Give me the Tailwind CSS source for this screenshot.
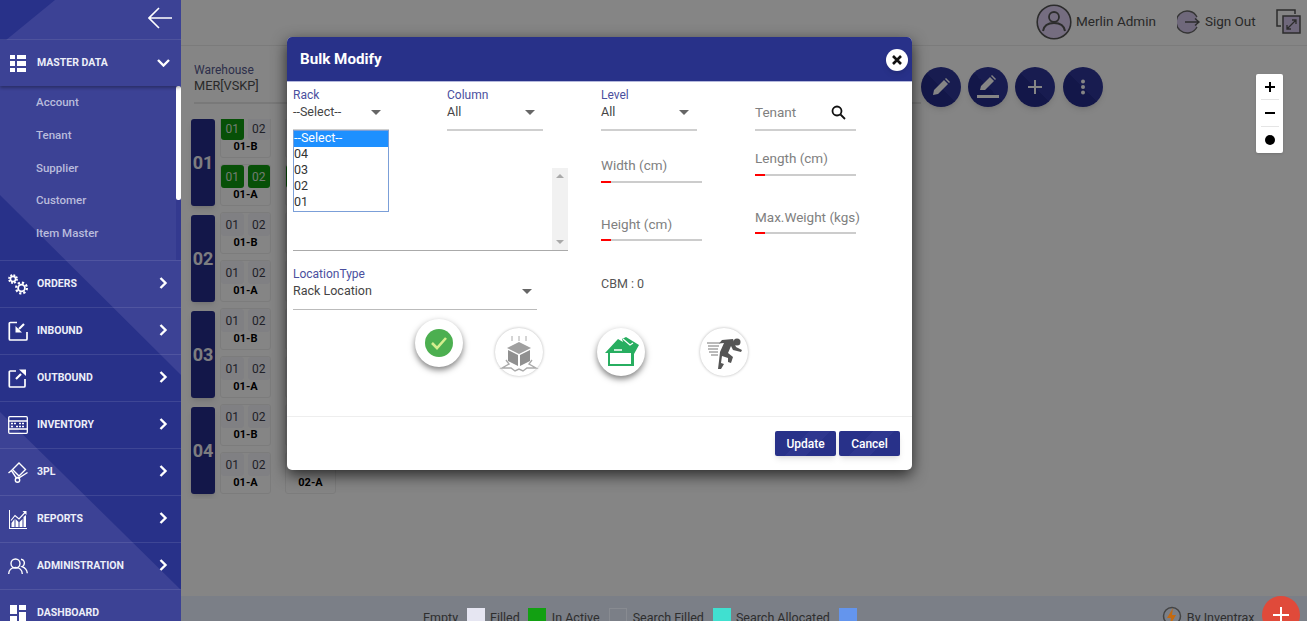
<!DOCTYPE html>
<html lang="en">
<head>
    <meta charset="UTF-8">
    <meta name="viewport" content="width=device-width, initial-scale=1.0">
    <title>Bulk Modify</title>
    <script src="https://cdn.jsdelivr.net/npm/@tailwindcss/browser@4"></script>
</head>

<body class="font-[Roboto,sans-serif]">
<div class="relative flex h-[621px] w-[1307px] overflow-hidden bg-white">

    <!-- sidebar -->
    <aside class="relative z-20 flex h-full w-[181px] shrink-0 flex-col overflow-hidden bg-[#3c4295] text-[10.500px] font-bold text-[#eceef8]">
        <svg class="absolute inset-0" width="181" height="621"><polygon points="0,0 55,0 0,45" fill="#283189"/><polygon points="0,195 181,375 181,590 0,412" fill="#283189"/></svg>

        <div class="relative flex h-[40px] shrink-0 items-center justify-end border-b border-white/10 pr-[9px]">
            <svg class="mb-[4px]" width="24" height="22" viewBox="0 0 24 22" fill="none" stroke="#fff" stroke-width="1.6"><path d="M11 1 1 11l10 10M1 11h23"/></svg>
        </div>

        <div class="relative z-10 flex h-[46px] shrink-0 items-center bg-[#3c4295] shadow-[0_2px_3px_rgba(0,0,0,0.3)]">
            <svg class="ml-[10px] mr-[11px]" width="16" height="17" viewBox="0 0 16 17" fill="#fff"><path d="M0 0h5v4H0zM7 0h9v4H7zM0 6h5v5H0zM7 6h9v5H7zM0 13h5v4H0zM7 13h9v4H7z"/></svg>
            <span>MASTER DATA</span>
            <svg class="ml-auto mr-[11px]" width="13" height="8" viewBox="0 0 13 8" fill="none" stroke="#fff" stroke-width="2.4"><path d="m1 1 5.500 5.500L12 1"/></svg>
        </div>

        <div class="relative h-[174px] shrink-0 pl-[36px] text-[11.500px] font-medium text-[#b9bcdc]">
            <div class="flex h-[33px] items-center">Account</div>
            <div class="flex h-[33px] items-center">Tenant</div>
            <div class="flex h-[33px] items-center">Supplier</div>
            <div class="flex h-[32px] items-center">Customer</div>
            <div class="flex h-[33px] items-center">Item Master</div>
            <div class="absolute right-0 top-0 h-full w-[5px] bg-[#33398f]">
                <div class="h-[114px] rounded-[2px] bg-white"></div>
            </div>
        </div>

        <div class="relative flex h-[47px] shrink-0 items-center border-t border-white/10">
            <svg class="ml-[8px] mr-[9px]" width="20" height="21" viewBox="0 0 20 21" fill="none" stroke="#fff"><circle cx="5" cy="5" r="2.600" stroke-width="1.600"/><circle cx="5" cy="5" r="4" stroke-width="1.800" stroke-dasharray="1.800 1.340"/><circle cx="13.500" cy="14" r="3.400" stroke-width="1.800"/><circle cx="13.500" cy="14" r="5.400" stroke-width="2.200" stroke-dasharray="2.200 2"/></svg>
            <span>ORDERS</span>
            <svg class="ml-auto -mt-[3px] mr-[13px]" width="9" height="12" viewBox="0 0 9 12" fill="none" stroke="#fff" stroke-width="2.400"><path d="m1.500 1 5 5-5 5"/></svg>
        </div>
        <div class="relative flex h-[47px] shrink-0 items-center border-t border-white/10">
            <svg class="ml-[8px] mr-[9px]" width="20" height="20" viewBox="0 0 20 20" fill="none" stroke="#fff" stroke-width="1.700"><path d="M9 1.500H2.300a1 1 0 0 0-1 1V18a1 1 0 0 0 1 1H18a1 1 0 0 0 1-1v-7"/><path d="m16 3-5 5" stroke-width="2.200"/><path d="M7.500 5v6.500H14Z" fill="#fff" stroke="none"/></svg>
            <span>INBOUND</span>
            <svg class="ml-auto -mt-[3px] mr-[13px]" width="9" height="12" viewBox="0 0 9 12" fill="none" stroke="#fff" stroke-width="2.400"><path d="m1.500 1 5 5-5 5"/></svg>
        </div>
        <div class="relative flex h-[47px] shrink-0 items-center border-t border-white/10">
            <svg class="ml-[8px] mr-[9px]" width="20" height="20" viewBox="0 0 20 20" fill="none" stroke="#fff" stroke-width="1.700"><path d="M8 3H2.300a1 1 0 0 0-1 1V18a1 1 0 0 0 1 1H16a1 1 0 0 0 1-1v-7"/><path d="m8 11 5-5" stroke-width="2.200"/><path d="M11 1.500h7V8Z" fill="#fff" stroke="none"/></svg>
            <span>OUTBOUND</span>
            <svg class="ml-auto -mt-[3px] mr-[13px]" width="9" height="12" viewBox="0 0 9 12" fill="none" stroke="#fff" stroke-width="2.400"><path d="m1.500 1 5 5-5 5"/></svg>
        </div>
        <div class="relative flex h-[47px] shrink-0 items-center border-t border-white/10">
            <svg class="ml-[8px] mr-[9px]" width="20" height="18" viewBox="0 0 20 18" fill="none" stroke="#fff" stroke-width="1.300"><rect x=".7" y=".7" width="18.600" height="16.600" rx="1"/><path d="M.7 5h18.600M.7 13h18.600"/><path d="M3 7.500h5M11 7.500h6M3 10.500h2M8 10.500h9" stroke-width="1.600" stroke-dasharray="2 1"/></svg>
            <span>INVENTORY</span>
            <svg class="ml-auto -mt-[3px] mr-[13px]" width="9" height="12" viewBox="0 0 9 12" fill="none" stroke="#fff" stroke-width="2.400"><path d="m1.500 1 5 5-5 5"/></svg>
        </div>
        <div class="relative flex h-[47px] shrink-0 items-center border-t border-white/10">
            <svg class="ml-[8px] mr-[9px]" width="20" height="21" viewBox="0 0 20 21" fill="none" stroke="#fff" stroke-width="1.400"><path d="m11 1 6.500 6.500L11 14 4.500 7.500Z"/><path d="M.5 11 3.500 8.500 8 15.500h3.500l8-5"/><circle cx="9.500" cy="18" r="2.200"/></svg>
            <span>3PL</span>
            <svg class="ml-auto -mt-[3px] mr-[13px]" width="9" height="12" viewBox="0 0 9 12" fill="none" stroke="#fff" stroke-width="2.400"><path d="m1.500 1 5 5-5 5"/></svg>
        </div>
        <div class="relative flex h-[47px] shrink-0 items-center border-t border-white/10">
            <svg class="ml-[9px] mr-[10px]" width="18" height="19" viewBox="0 0 18 19" fill="#fff"><path d="M0 0h1v18h17v1H0z"/><path d="M2.500 17v-4l3-4v8zM6.500 17V9l3 3v5zM10.500 17v-5l3-3v8zM14.500 17V7l2.500-2v12z"/><path d="M2 10.500 6 5.500l4 3.500 6.500-7" fill="none" stroke="#fff" stroke-width="1.200"/><path d="M13.500 1H17.500V5Z"/></svg>
            <span>REPORTS</span>
            <svg class="ml-auto -mt-[3px] mr-[13px]" width="9" height="12" viewBox="0 0 9 12" fill="none" stroke="#fff" stroke-width="2.400"><path d="m1.500 1 5 5-5 5"/></svg>
        </div>
        <div class="relative flex h-[47px] shrink-0 items-center border-t border-white/10">
            <svg class="ml-[8px] mr-[9px]" width="20" height="17" viewBox="0 0 20 17" fill="none" stroke="#fff" stroke-width="1.400"><circle cx="7.500" cy="5.500" r="4.500"/><path d="M.7 16c0-4 3-6.500 6.800-6.500S14.300 12 14.300 16M13 1.200c3 .5 4 3 3 5.500-.4 1-1 1.500-2 2 3 1 5 3.500 5.300 6.500"/></svg>
            <span>ADMINISTRATION</span>
            <svg class="ml-auto -mt-[3px] mr-[13px]" width="9" height="12" viewBox="0 0 9 12" fill="none" stroke="#fff" stroke-width="2.400"><path d="m1.500 1 5 5-5 5"/></svg>
        </div>
        <div class="relative flex h-[47px] shrink-0 items-center border-t border-white/10">
            <svg class="ml-[10px] mr-[11px]" width="16" height="16" viewBox="0 0 16 16" fill="#fff"><path d="M0 0h7v9H0zM9 0h7v5H9zM9 7h7v9H9zM0 11h7v5H0z"/></svg>
            <span>DASHBOARD</span>
        </div>
    </aside>

    <!-- main area -->
    <main class="flex h-full flex-1 flex-col text-[#4f4f4f]">
        <header class="flex h-[46px] shrink-0 items-center border-b border-[#ebebeb] pb-[2px] text-[13.500px]">
            <svg class="ml-[855px]" width="36" height="36" viewBox="0 0 36 36"><circle cx="18" cy="18" r="16.800" fill="#e0d2f5" stroke="#555" stroke-width="1.600"/><circle cx="18" cy="13" r="5" fill="none" stroke="#555" stroke-width="1.800"/><path d="M7 27c1-6 6-8 11-8s10 2 11 8" fill="none" stroke="#555" stroke-width="2"/></svg>
            <span class="ml-[4px]">Merlin Admin</span>
            <svg class="ml-[21px]" width="24" height="24" viewBox="0 0 24 24"><path d="M20 7A11 11 0 1 0 20 17" fill="#d5c8ec" stroke="#666" stroke-width="1.400"/><path d="M8 12h14m-4-3.500 4 3.500-4 3.500" fill="none" stroke="#555" stroke-width="1.400"/></svg>
            <span class="ml-[4px]">Sign Out</span>
            <svg class="ml-[20px]" width="25" height="25" viewBox="0 0 25 25" fill="none" stroke="#555" stroke-width="1.500"><path d="M19 5V1H1v16h4"/><rect x="7" y="7" width="17" height="17" fill="#d5c8ec"/><path d="m11 20 9-9m-4 0h4v4m-5 5h-4v-4" stroke-width="1.300"/></svg>
        </header>

        <div class="relative min-h-0 flex-1">
            <div class="flex h-[73px] pl-[13px] pt-[16px]">
                <div class="h-[42px] w-[727px] border-b-2 border-[#e8e8e8] text-[12px] leading-[16px] text-[#575b90]">
                    <div>Warehouse</div>
                    <div class="text-[12.750px] text-[#505050]">MER[VSKP]</div>
                </div>
                <div class="mt-[5px] flex gap-[7px]">
                    <div class="flex h-[40px] w-[40px] items-center justify-center rounded-full bg-[linear-gradient(45deg,#262c8c_50%,#2f369a_50%)] shadow-md">
                        <svg width="18" height="18" viewBox="0 0 18 18" fill="#fff"><path d="m1 17 1-5L12 2l4 4L6 16zM13 1l1-1 4 4-1 1z"/></svg>
                    </div>
                    <div class="flex h-[40px] w-[40px] items-center justify-center rounded-full bg-[linear-gradient(45deg,#262c8c_50%,#2f369a_50%)] shadow-md">
                        <svg width="22" height="24" viewBox="0 0 22 24" fill="#fff"><path d="m3 15 1-4 9-9 4 4-9 9zM14 1l1-1 4 4-1 1zM0 20h22v3H0z"/></svg>
                    </div>
                    <div class="flex h-[40px] w-[40px] items-center justify-center rounded-full bg-[linear-gradient(45deg,#262c8c_50%,#2f369a_50%)] shadow-md">
                        <svg width="14" height="14" viewBox="0 0 14 14" fill="#fff"><path d="M6 0h2v6h6v2H8v6H6V8H0V6h6z"/></svg>
                    </div>
                    <div class="ml-[1px] flex h-[40px] w-[40px] items-center justify-center rounded-full bg-[linear-gradient(45deg,#262c8c_50%,#2f369a_50%)] shadow-md">
                        <svg width="6" height="16" viewBox="0 0 6 16" fill="#fff"><circle cx="3" cy="2.500" r="2"/><circle cx="3" cy="8" r="2"/><circle cx="3" cy="13.500" r="2"/></svg>
                    </div>
                </div>
            </div>

            <!-- rack map -->
            <div class="h-[380px] overflow-hidden pl-[10px] text-[#3e3e4e]">
                <div class="-mt-[3px] flex flex-col">

                    <div class="flex h-[96px]">
                        <div class="mr-[5px] mt-[3px] flex h-[87px] w-[24px] items-center justify-center rounded-[3px] bg-[#262c8c] text-[18px] font-bold text-[#f0f0f5] shadow-md">01</div>
                        <div class="flex w-[65px] flex-col gap-[6px]">
                            <div class="h-[42px] w-[51px] rounded-[3px] border border-[#eeeeee]"><div class="flex gap-[4px]"><div class="flex h-[23px] w-[23px] items-center justify-center rounded-[3px] bg-[#0e9a0e] text-[12px] text-[#d8ecd8]">01</div><div class="flex h-[23px] w-[23px] items-center justify-center rounded-[3px] bg-[#f6f6fc] text-[12px]">02</div></div><div class="text-center text-[11px] font-bold leading-[14px] text-black">01-B</div></div>
                            <div class="h-[42px] w-[51px] rounded-[3px] border border-[#eeeeee]"><div class="flex gap-[4px]"><div class="flex h-[23px] w-[23px] items-center justify-center rounded-[3px] bg-[#0e9a0e] text-[12px] text-[#d8ecd8]">01</div><div class="flex h-[23px] w-[23px] items-center justify-center rounded-[3px] bg-[#0e9a0e] text-[12px] text-[#d8ecd8]">02</div></div><div class="text-center text-[11px] font-bold leading-[14px] text-black">01-A</div></div>
                        </div>
                        <div class="flex w-[51px] flex-col gap-[6px]">
                            <div class="h-[42px] rounded-[3px] border border-[#eeeeee]"><div class="h-[23px] w-[23px] rounded-[3px] bg-[#f6f6fc]"></div></div>
                            <div class="h-[42px] rounded-[3px] border border-[#eeeeee]"><div class="h-[23px] w-[23px] rounded-[3px] bg-[#0e9a0e]"></div></div>
                        </div>
                    </div>

                    <div class="flex h-[96px]">
                        <div class="mr-[5px] mt-[3px] flex h-[87px] w-[24px] items-center justify-center rounded-[3px] bg-[#262c8c] text-[18px] font-bold text-[#f0f0f5] shadow-md">02</div>
                        <div class="flex w-[65px] flex-col gap-[6px]">
                            <div class="h-[42px] w-[51px] rounded-[3px] border border-[#eeeeee]"><div class="flex gap-[4px]"><div class="flex h-[23px] w-[23px] items-center justify-center rounded-[3px] bg-[#f6f6fc] text-[12px]">01</div><div class="flex h-[23px] w-[23px] items-center justify-center rounded-[3px] bg-[#f6f6fc] text-[12px]">02</div></div><div class="text-center text-[11px] font-bold leading-[14px] text-black">01-B</div></div>
                            <div class="h-[42px] w-[51px] rounded-[3px] border border-[#eeeeee]"><div class="flex gap-[4px]"><div class="flex h-[23px] w-[23px] items-center justify-center rounded-[3px] bg-[#f6f6fc] text-[12px]">01</div><div class="flex h-[23px] w-[23px] items-center justify-center rounded-[3px] bg-[#f6f6fc] text-[12px]">02</div></div><div class="text-center text-[11px] font-bold leading-[14px] text-black">01-A</div></div>
                        </div>
                        <div class="flex w-[51px] flex-col gap-[6px]">
                            <div class="h-[42px] rounded-[3px] border border-[#eeeeee]"><div class="h-[23px] w-[23px] rounded-[3px] bg-[#f6f6fc]"></div></div>
                            <div class="h-[42px] rounded-[3px] border border-[#eeeeee]"><div class="h-[23px] w-[23px] rounded-[3px] bg-[#f6f6fc]"></div></div>
                        </div>
                    </div>

                    <div class="flex h-[96px]">
                        <div class="mr-[5px] mt-[3px] flex h-[87px] w-[24px] items-center justify-center rounded-[3px] bg-[#262c8c] text-[18px] font-bold text-[#f0f0f5] shadow-md">03</div>
                        <div class="flex w-[65px] flex-col gap-[6px]">
                            <div class="h-[42px] w-[51px] rounded-[3px] border border-[#eeeeee]"><div class="flex gap-[4px]"><div class="flex h-[23px] w-[23px] items-center justify-center rounded-[3px] bg-[#f6f6fc] text-[12px]">01</div><div class="flex h-[23px] w-[23px] items-center justify-center rounded-[3px] bg-[#f6f6fc] text-[12px]">02</div></div><div class="text-center text-[11px] font-bold leading-[14px] text-black">01-B</div></div>
                            <div class="h-[42px] w-[51px] rounded-[3px] border border-[#eeeeee]"><div class="flex gap-[4px]"><div class="flex h-[23px] w-[23px] items-center justify-center rounded-[3px] bg-[#f6f6fc] text-[12px]">01</div><div class="flex h-[23px] w-[23px] items-center justify-center rounded-[3px] bg-[#f6f6fc] text-[12px]">02</div></div><div class="text-center text-[11px] font-bold leading-[14px] text-black">01-A</div></div>
                        </div>
                        <div class="flex w-[51px] flex-col gap-[6px]">
                            <div class="h-[42px] rounded-[3px] border border-[#eeeeee]"><div class="h-[23px] w-[23px] rounded-[3px] bg-[#f6f6fc]"></div></div>
                            <div class="h-[42px] rounded-[3px] border border-[#eeeeee]"><div class="h-[23px] w-[23px] rounded-[3px] bg-[#f6f6fc]"></div></div>
                        </div>
                    </div>

                    <div class="flex h-[96px]">
                        <div class="mr-[5px] mt-[3px] flex h-[87px] w-[24px] items-center justify-center rounded-[3px] bg-[#262c8c] text-[18px] font-bold text-[#f0f0f5] shadow-md">04</div>
                        <div class="flex w-[65px] flex-col gap-[6px]">
                            <div class="h-[42px] w-[51px] rounded-[3px] border border-[#eeeeee]"><div class="flex gap-[4px]"><div class="flex h-[23px] w-[23px] items-center justify-center rounded-[3px] bg-[#f6f6fc] text-[12px]">01</div><div class="flex h-[23px] w-[23px] items-center justify-center rounded-[3px] bg-[#f6f6fc] text-[12px]">02</div></div><div class="text-center text-[11px] font-bold leading-[14px] text-black">01-B</div></div>
                            <div class="h-[42px] w-[51px] rounded-[3px] border border-[#eeeeee]"><div class="flex gap-[4px]"><div class="flex h-[23px] w-[23px] items-center justify-center rounded-[3px] bg-[#f6f6fc] text-[12px]">01</div><div class="flex h-[23px] w-[23px] items-center justify-center rounded-[3px] bg-[#f6f6fc] text-[12px]">02</div></div><div class="text-center text-[11px] font-bold leading-[14px] text-black">01-A</div></div>
                        </div>
                        <div class="flex w-[51px] flex-col gap-[6px]">
                            <div class="h-[42px] rounded-[3px] border border-[#eeeeee]"><div class="h-[23px] w-[23px] rounded-[3px] bg-[#f6f6fc]"></div></div>
                            <div class="h-[42px] rounded-[3px] border border-[#eeeeee]"><div class="h-[23px]"></div><div class="text-center text-[11px] font-bold leading-[14px] text-black">02-A</div></div>
                        </div>
                    </div>

                </div>
            </div>
        </div>

        <footer class="relative z-20 flex h-[25px] shrink-0 items-start bg-[#7b7f87] pl-[242px] pt-[12px] text-[12.500px] leading-[20px] text-[#2e2e2e]">
            <span>Empty</span>
            <div class="ml-[9px] h-[20px] w-[18px] bg-[#e6e6f2]"></div>
            <span class="ml-[5px]">Filled</span>
            <div class="ml-[8px] h-[20px] w-[18px] bg-[#12a012]"></div>
            <span class="ml-[6px]">In Active</span>
            <div class="ml-[9px] h-[20px] w-[18px] border border-[#888b91] bg-[#7b7f87]"></div>
            <span class="ml-[6px]">Search Filled</span>
            <div class="ml-[9px] h-[20px] w-[18px] bg-[#40e0d0]"></div>
            <span class="ml-[5px]">Search Allocated</span>
            <div class="ml-[9px] h-[20px] w-[18px] bg-[#6495ed]"></div>
            <svg class="ml-[305px] -mt-[3px]" width="20" height="22" viewBox="0 0 20 22" fill="none"><circle cx="10" cy="11" r="8.500" stroke="#444" stroke-width="1.500"/><path d="M11 3 5 13h4l-1 7 6-10h-4z" fill="#c46a10"/></svg>
            <span class="ml-[5px]">By Inventrax</span>
        </footer>
    </main>

    <!-- backdrop -->
    <div class="absolute inset-y-0 left-[181px] right-0 z-10 bg-black/48"></div>

    <!-- map zoom control -->
    <div class="absolute left-[1256px] top-[74px] z-20 flex h-[79px] w-[27px] flex-col items-center rounded-[2px] bg-white text-black shadow-sm">
        <div class="flex h-[26px] w-[18px] items-center justify-center border-b border-[#e5e5e5]"><svg width="10" height="10" viewBox="0 0 10 10"><path d="M4 0h2v4h4v2H6v4H4V6H0V4h4z"/></svg></div>
        <div class="flex h-[27px] w-[18px] items-center justify-center border-b border-[#e5e5e5]"><svg width="10" height="2" viewBox="0 0 10 2"><path d="M0 0h10v2H0z"/></svg></div>
        <div class="flex flex-1 items-center justify-center"><div class="h-[10px] w-[10px] rounded-full bg-black"></div></div>
    </div>

    <!-- add button -->
    <div class="absolute left-[1262px] top-[596px] z-20 flex h-[38px] w-[38px] items-center justify-center rounded-full bg-[#e04a3a]">
        <svg width="16" height="16" viewBox="0 0 16 16" fill="#fff"><path d="M7 0h2v7h7v2H9v7H7V9H0V7h7z"/></svg>
    </div>

    <!-- bulk modify dialog -->
    <div class="absolute left-[287px] top-[37px] z-30 flex h-[433px] w-[625px] flex-col rounded-[5px] bg-white text-[#444] shadow-[0_5px_15px_rgba(0,0,0,0.7)]">
        <div class="flex h-[45px] shrink-0 items-center rounded-t-[5px] border-b border-[#b4b8dc] bg-[#283189] pl-[13px] pr-[4px] text-[15.200px] font-bold text-white">
            <span>Bulk Modify</span>
            <div class="ml-auto flex h-[22px] w-[22px] translate-y-[1px] items-center justify-center rounded-full bg-white shadow-md">
                <svg width="10" height="10" viewBox="0 0 10 10" stroke="#111" stroke-width="2.600"><path d="m1 1 8 8M9 1 1 9"/></svg>
            </div>
        </div>

        <div class="flex pl-[6px]">
            <div class="relative w-[308px]">
                <div class="flex">
                    <div class="w-[154px]">
                        <div class="h-[49px] w-[96px] border-b-2 border-[#cfcfcf] pt-[6px]">
                            <div class="text-[12px] leading-[14px] text-[#4a4f9e]">Rack</div>
                            <div class="mt-[2px] flex h-[16px] items-center text-[12.500px]">--Select--<svg class="ml-auto mr-[8px]" width="10" height="5" viewBox="0 0 10 5" fill="#666"><path d="M0 0h10L5 5z"/></svg></div>
                        </div>
                    </div>
                    <div class="h-[49px] w-[96px] border-b-2 border-[#cfcfcf] pt-[6px]">
                        <div class="text-[12px] leading-[14px] text-[#4a4f9e]">Column</div>
                        <div class="mt-[2px] flex h-[16px] items-center text-[12.500px]">All<svg class="ml-auto mr-[8px]" width="10" height="5" viewBox="0 0 10 5" fill="#666"><path d="M0 0h10L5 5z"/></svg></div>
                    </div>
                </div>

                <div class="absolute left-0 top-[48px] h-[82px] w-[96px] border border-[#7b9fd8] bg-white text-[12.500px] leading-[14px] text-[#333]">
                    <div class="h-[16px] bg-[#1e90ff] text-white">--Select--</div>
                    <div class="h-[16px]">04</div>
                    <div class="h-[16px]">03</div>
                    <div class="h-[16px]">02</div>
                    <div class="h-[16px]">01</div>
                </div>

                <div class="mt-[37px] flex h-[83px] w-[275px] justify-end border-b border-[#aaa]">
                    <div class="flex w-[16px] flex-col items-center justify-between bg-[#f1f1f1] py-[6px]">
                        <svg width="8" height="4" viewBox="0 0 8 4" fill="#aaa"><path d="M4 0l4 4H0z"/></svg>
                        <svg width="8" height="4" viewBox="0 0 8 4" fill="#aaa"><path d="M0 0h8L4 4z"/></svg>
                    </div>
                </div>

                <div class="mt-[16px] h-[43px] w-[244px] border-b border-[#bbb]">
                    <div class="text-[12px] leading-[14px] text-[#4a4f9e]">LocationType</div>
                    <div class="mt-[2px] flex h-[17px] items-center text-[12.500px]">Rack Location<svg class="ml-auto mr-[5px]" width="10" height="5" viewBox="0 0 10 5" fill="#666"><path d="M0 0h10L5 5z"/></svg></div>
                </div>
            </div>

            <div class="w-[154px]">
                <div class="h-[49px] w-[96px] border-b-2 border-[#cfcfcf] pt-[6px]">
                    <div class="text-[12px] leading-[14px] text-[#4a4f9e]">Level</div>
                    <div class="mt-[2px] flex h-[16px] items-center text-[12.500px]">All<svg class="ml-auto mr-[8px]" width="10" height="5" viewBox="0 0 10 5" fill="#666"><path d="M0 0h10L5 5z"/></svg></div>
                </div>
                <div class="mt-[25px] w-[101px]">
                    <div class="h-[18px] text-[13.500px] leading-[18px] text-[#808080]">Width (cm)</div>
                    <div class="mt-[7px] flex h-[2px]"><div class="w-[10px] bg-[#f00]"></div><div class="flex-1 bg-[#ccc]"></div></div>
                </div>
                <div class="mt-[32px] w-[101px]">
                    <div class="h-[18px] text-[13.500px] leading-[18px] text-[#808080]">Height (cm)</div>
                    <div class="mt-[6px] flex h-[2px]"><div class="w-[10px] bg-[#f00]"></div><div class="flex-1 bg-[#ccc]"></div></div>
                </div>
                <div class="mt-[35px] text-[12.500px] leading-[16px] text-[#555]">CBM : 0</div>
            </div>

            <div class="w-[150px]">
                <div class="flex h-[49px] w-[101px] items-center border-b-2 border-[#cfcfcf] pt-[14px] text-[13.500px] text-[#808080]">
                    Tenant
                    <svg class="ml-auto mr-[10px] -mt-[1px]" width="15" height="15" viewBox="0 0 15 15" fill="none" stroke="#111" stroke-width="1.800"><circle cx="6" cy="6" r="4.500"/><path d="m9.500 9.500 4.500 4.500"/></svg>
                </div>
                <div class="mt-[18px] w-[101px]">
                    <div class="h-[18px] text-[13.500px] leading-[18px] text-[#808080]">Length (cm)</div>
                    <div class="mt-[7px] flex h-[2px]"><div class="w-[10px] bg-[#f00]"></div><div class="flex-1 bg-[#ccc]"></div></div>
                </div>
                <div class="mt-[32px] w-[101px]">
                    <div class="h-[18px] whitespace-nowrap text-[13.500px] leading-[18px] text-[#808080]">Max.Weight (kgs)</div>
                    <div class="mt-[6px] flex h-[2px]"><div class="w-[10px] bg-[#f00]"></div><div class="flex-1 bg-[#ccc]"></div></div>
                </div>
            </div>
        </div>

        <!-- status icons -->
        <div class="mt-[9px] flex items-start pl-[128px]">
            <div class="flex h-[48px] w-[48px] items-center justify-center rounded-full bg-white shadow-[0_3px_6px_rgba(0,0,0,0.5)]">
                <svg width="30" height="30" viewBox="0 0 30 30"><circle cx="15" cy="15" r="14" fill="#4caf50"/><path d="m8 15 5 5 9-10" fill="none" stroke="#d4ee8e" stroke-width="2.600"/></svg>
            </div>
            <div class="ml-[32px] mt-[9px] flex h-[48px] w-[48px] items-center justify-center rounded-full bg-white shadow-[0_0_3px_rgba(0,0,0,0.3)]">
                <svg width="48" height="48" viewBox="0 0 48 48"><path d="M17 8v5M24 8v5M31 8v5" stroke="#aaa"/><polygon points="24,14 36,20 24,26 12,20" fill="#a0a0a0"/><polygon points="13,22 23,27 23,38 13,33" fill="#909090"/><polygon points="25,27 35,22 35,33 25,38" fill="#909090"/><path d="M11 32l3 4-7 4 9 0 4 3 4-2 4 2 4-3 9 0-7-4 3-4" fill="none" stroke="#aaa" stroke-width="1.400"/></svg>
            </div>
            <div class="ml-[54px] mt-[9px] flex h-[48px] w-[48px] items-center justify-center rounded-full bg-white shadow-[0_3px_6px_rgba(0,0,0,0.5)]">
                <svg width="48" height="48" viewBox="0 0 48 48"><path d="M8 25 21 11l5 3-1-3 4-2 13 8-5 9v12H11V25z" fill="#27ae60"/><rect x="13" y="25" width="21" height="11" fill="#fff"/><path d="M17 22h8" stroke="#fff" stroke-width="1.500"/><path d="m26 11 7 6 3-2" fill="none" stroke="#fff" stroke-width="1.200"/></svg>
            </div>
            <div class="ml-[55px] mt-[9px] flex h-[48px] w-[48px] items-center justify-center rounded-full bg-white shadow-[0_0_3px_rgba(0,0,0,0.3)]">
                <svg width="48" height="48" viewBox="0 0 48 48"><circle cx="37" cy="14" r="3.500" fill="#555"/><path d="M22 12l11-1 3 8 6 3-1 2-8-2-2-4-3 7 5 4-2 6-3-1v-4l-6-2-1 7 3 1-3 5h-3l1-8 1-9 4-9-5 .5z" fill="#555"/><path d="M7 15h13M8 18h11M8 21h10M9 24h9M11 27h7" stroke="#777"/></svg>
            </div>
        </div>

        <div class="mt-auto flex h-[54px] shrink-0 items-start justify-end gap-[3px] border-t border-[#eee] pr-[12px] pt-[14px]">
            <div class="flex h-[25px] w-[61px] items-center justify-center rounded-[2px] bg-[linear-gradient(135deg,#283189_40%,#2f378f_40%,#2f378f_65%,#283189_65%)] text-[12px] font-medium text-white shadow-md">Update</div>
            <div class="flex h-[25px] w-[61px] items-center justify-center rounded-[2px] bg-[linear-gradient(135deg,#283189_40%,#2f378f_40%,#2f378f_65%,#283189_65%)] text-[12px] font-medium text-white shadow-md">Cancel</div>
        </div>
    </div>
</div>
</body>
</html>
